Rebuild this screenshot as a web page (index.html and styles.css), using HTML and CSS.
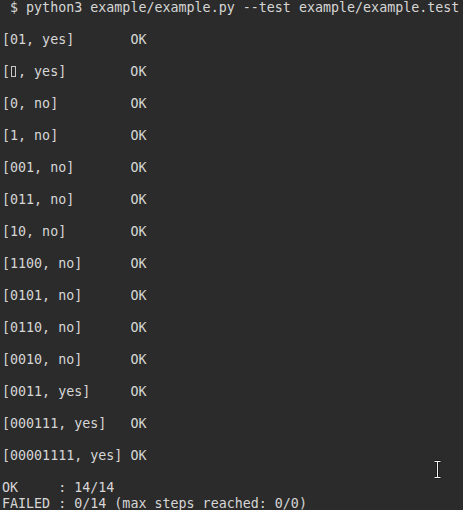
FILE: index.html
```html
<!DOCTYPE html>
<html><head><link rel="stylesheet" href="styles.css"></head>
<body>
<pre class="term"> $ python3 example/example.py --test example/example.test

[01, yes]       OK

[<span class="tofu"><span class="box"></span></span>, yes]        OK

[0, no]         OK

[1, no]         OK

[001, no]       OK

[011, no]       OK

[10, no]        OK

[1100, no]      OK

[0101, no]      OK

[0110, no]      OK

[0010, no]      OK

[0011, yes]     OK

[000111, yes]   OK

[00001111, yes] OK

OK     : 14/14
FAILED : 0/14 (max steps reached: 0/0)</pre>
<svg class="ibeam" width="9" height="19" viewBox="0 0 9 19">
  <path d="M1.5 1.5h6M1.5 17.5h6M4.5 1.5v16" stroke="#1a1a1a" stroke-width="3" fill="none"/>
  <path d="M1.5 1.5h6M1.5 17.5h6M4.5 1.5v16" stroke="#f2f2f2" stroke-width="1" fill="none"/>
</svg>
</body></html>
```
FILE: styles.css
```css
html,body{margin:0;height:100%}
body{background:#2b2b2b;color:#d6d6d6;position:relative;overflow:hidden}
.term{margin:0 0 0 2px;font-family:"DejaVu Sans Mono",monospace;font-size:13.33px;line-height:16px;white-space:pre}
.tofu{display:inline-block;width:8px;height:10px;vertical-align:-1px;position:relative}
.box{position:absolute;left:1px;top:-1px;width:3px;height:9px;border:1px solid #c8c8c8}
.ibeam{position:absolute;left:433px;top:460px}
```
